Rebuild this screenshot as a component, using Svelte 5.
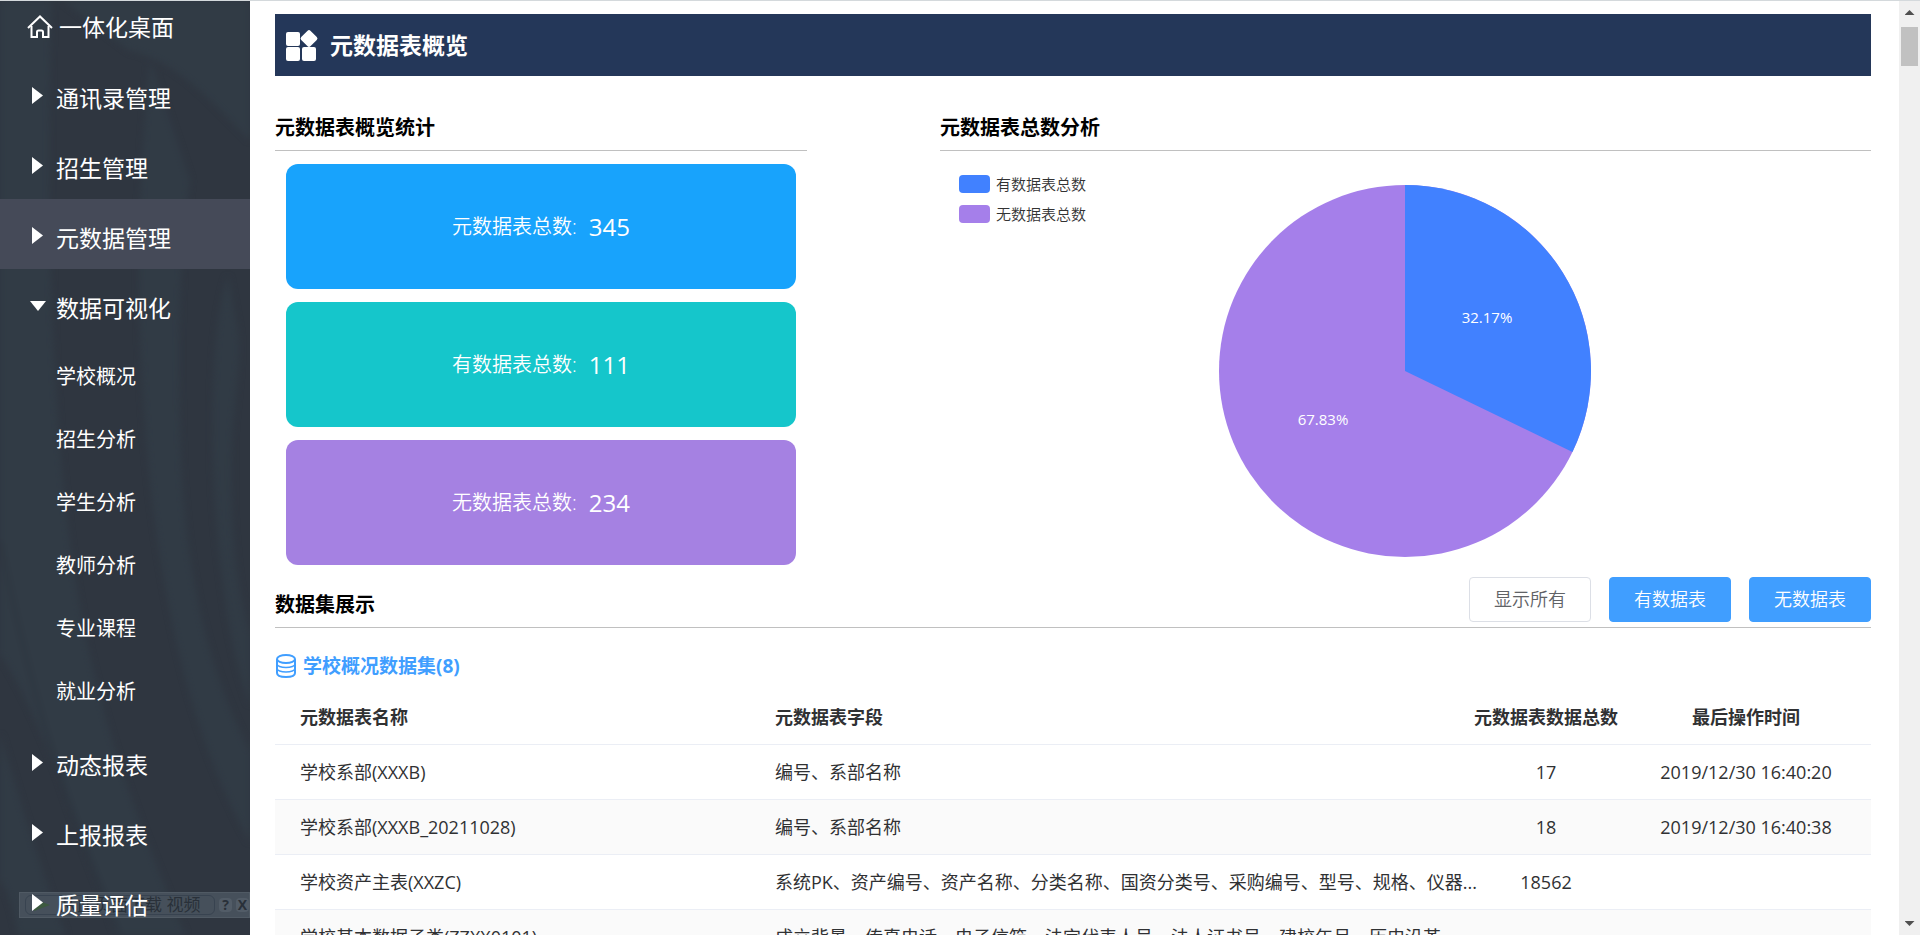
<script lang="ts">
  interface MenuItem {
    label: string;
    active?: boolean;
    children?: string[];
  }

  const menu: MenuItem[] = [
    { label: '通讯录管理' },
    { label: '招生管理' },
    { label: '元数据管理', active: true },
    {
      label: '数据可视化',
      children: ['学校概况', '招生分析', '学生分析', '教师分析', '专业课程', '就业分析'],
    },
    { label: '动态报表' },
    { label: '上报报表' },
    { label: '质量评估' },
  ];

  const stats = [
    { label: '元数据表总数', value: 345, tone: 'blue' },
    { label: '有数据表总数', value: 111, tone: 'teal' },
    { label: '无数据表总数', value: 234, tone: 'purple' },
  ];

  const rows = [
    { name: '学校系部(XXXB)', fields: '编号、系部名称', total: 17, time: '2019/12/30 16:40:20' },
    { name: '学校系部(XXXB_20211028)', fields: '编号、系部名称', total: 18, time: '2019/12/30 16:40:38' },
    {
      name: '学校资产主表(XXZC)',
      fields: '系统PK、资产编号、资产名称、分类名称、国资分类号、采购编号、型号、规格、仪器...',
      total: 18562,
      time: '',
    },
    {
      name: '学校基本数据子类(ZZXX0101)',
      fields: '成立背景、传真电话、电子信箱、法定代表人号、法人证书号、建校年月、历史沿革',
      total: '',
      time: '',
    },
  ];

  // Pie geometry: first slice starts at 12 o'clock and runs clockwise
  const R = 186;
  const share = stats[1].value / stats[0].value;
  const endX = R + R * Math.sin(share * 2 * Math.PI);
  const endY = R - R * Math.cos(share * 2 * Math.PI);
  const withData = (share * 100).toFixed(2) + '%';
  const withoutData = ((1 - share) * 100).toFixed(2) + '%';
</script>

<div class="layout">
  <nav class="sidebar">
    <svg class="streaks" viewBox="0 0 250 935" preserveAspectRatio="none" aria-hidden="true">
      <path d="M-10 -10H52C46 180 50 330 62 470C76 620 100 740 190 945H120C70 800 30 690 -10 640Z" />
      <path d="M150 60C136 200 134 330 152 500C170 640 200 760 260 860V770C215 690 190 600 182 480C176 340 180 250 190 180Z" />
      <path d="M228 275C208 330 210 480 220 560C228 630 238 680 260 730V660C234 600 230 520 232 440C234 400 242 360 238 330Z" />
      <path d="M50 -10H260V150C220 110 180 60 130 50Z" />
      <path d="M-10 700C20 800 40 870 70 945H20C12 900 5 880 -10 870Z" />
      <path class="crease" d="M0 540C30 690 60 790 120 935" />
    </svg>

    <div class="download-bar">
      <span class="download-main"><i></i>从此页面下载 视频</span>
      <span class="download-key">?</span>
      <span class="download-key">X</span>
    </div>

    <div class="menu">
      <a class="home" href="#home">
        <svg width="26" height="24" viewBox="0 0 26 24" fill="none" stroke="#fff" stroke-width="2">
          <path d="M1 13L13 1.500L25 13" />
          <path d="M4.500 11V22H10V17Q10 15.500 11.500 15.500H14.500Q16 15.500 16 17V22H21.500V11" />
        </svg>
        <span>一体化桌面</span>
      </a>

      {#each menu as item}
        <button class="menu-item" class:active={item.active} aria-expanded={!!item.children}>
          <span class="caret" class:open={item.children}></span>
          <span>{item.label}</span>
        </button>
        {#if item.children}
          <ul class="submenu">
            {#each item.children as child}
              <li><a href="#{child}">{child}</a></li>
            {/each}
          </ul>
        {/if}
      {/each}
    </div>
  </nav>

  <main class="content">
    <header class="banner">
      <svg width="33" height="33" viewBox="0 0 33 33" fill="#fff" aria-hidden="true">
        <rect x="0" y="3" width="14" height="14" rx="2" />
        <rect x="0" y="18" width="14" height="14" rx="2" />
        <rect x="16" y="18" width="14" height="14" rx="2" />
        <rect x="16.500" y="3" width="13" height="13" rx="2" transform="rotate(45 23 9.500)" />
      </svg>
      <h1>元数据表概览</h1>
    </header>

    <div class="overview">
      <section>
        <h2 class="section-title">元数据表概览统计</h2>
        <div class="cards">
          {#each stats as stat}
            <div class="card {stat.tone}">
              <span>{stat.label}:</span>
              <span class="value">{stat.value}</span>
            </div>
          {/each}
        </div>
      </section>

      <section>
        <h2 class="section-title">元数据表总数分析</h2>
        <div class="chart">
          <ul class="legend">
            <li><span class="swatch has"></span>有数据表总数</li>
            <li><span class="swatch none"></span>无数据表总数</li>
          </ul>
          <svg class="pie" width="372" height="372" viewBox="0 0 372 372">
            <circle cx={R} cy={R} r={R} fill="#a57fea" />
            <path d="M{R} {R}V0A{R} {R} 0 0 1 {endX} {endY}Z" fill="#4181ff" />
            <text x="268" y="138">{withData}</text>
            <text x="104" y="240">{withoutData}</text>
          </svg>
        </div>
      </section>
    </div>

    <section>
      <div class="dataset-head">
        <h2>数据集展示</h2>
        <div class="filters">
          <button class="btn plain">显示所有</button>
          <button class="btn">有数据表</button>
          <button class="btn">无数据表</button>
        </div>
      </div>

      <h3 class="group-title">
        <svg width="20" height="24" viewBox="0 0 20 24" fill="none" stroke="#409eff" stroke-width="2">
          <ellipse cx="10" cy="5" rx="9" ry="4" />
          <path d="M1 5V19C1 21.500 5 23 10 23S19 21.500 19 19V5" />
          <path d="M1 10C1 12 5 13.500 10 13.500S19 12 19 10M1 14.500C1 16.500 5 18 10 18S19 16.500 19 14.500" stroke-width="1.500" />
        </svg>
        学校概况数据集(8)
      </h3>

      <table>
        <thead>
          <tr>
            <th class="col-name">元数据表名称</th>
            <th>元数据表字段</th>
            <th class="col-total">元数据表数据总数</th>
            <th class="col-time">最后操作时间</th>
          </tr>
        </thead>
        <tbody>
          {#each rows as row}
            <tr>
              <td>{row.name}</td>
              <td>{row.fields}</td>
              <td class="col-total">{row.total}</td>
              <td class="col-time">{row.time}</td>
            </tr>
          {/each}
        </tbody>
      </table>
    </section>
  </main>

  <div class="scrollbar" aria-hidden="true">
    <span class="arrow up"></span>
    <span class="thumb"></span>
    <span class="arrow down"></span>
  </div>
</div>

<style>
  :global(body) {
    font-family: 'Open Sans', 'Noto Sans CJK SC', sans-serif;
    color: #303133;
    background: #fff;
  }

  .layout {
    display: flex;
    box-sizing: border-box;
    height: 100vh;
    overflow: hidden;
    border-top: 1px solid #d4d9dc;
  }

  /* Sidebar */
  .sidebar {
    position: relative;
    flex: none;
    width: 250px;
    overflow: hidden;
    background: #2f3640;
  }

  .streaks {
    position: absolute;
    inset: 0;
    width: 100%;
    height: 100%;
    fill: #313b45;
    filter: blur(3px);
  }

  .streaks .crease {
    fill: none;
    stroke: #2d353f;
    stroke-width: 3;
  }

  .menu {
    position: relative;
  }

  .home,
  .menu-item,
  .submenu a {
    color: #fff;
    text-decoration: none;
  }

  .home {
    display: flex;
    align-items: center;
    gap: 6px;
    box-sizing: border-box;
    height: 58px;
    padding: 0 27px 6px;
    font-size: 23px;
    line-height: 28px;
  }

  .menu-item {
    display: flex;
    align-items: center;
    gap: 10px;
    box-sizing: border-box;
    width: 100%;
    height: 70px;
    padding: 8px 30px 0;
    border: 0;
    background: none;
    font-family: inherit;
    font-size: 23px;
    line-height: 28px;
    text-align: left;
    cursor: pointer;
  }

  .menu-item.active {
    background: #454a58;
  }

  .caret {
    display: flex;
    width: 16px;
    height: 22px;
  }

  .caret::before {
    content: '';
    width: 11px;
    height: 17px;
    margin-left: 2px;
    background: #fff;
    clip-path: polygon(0 0, 100% 50%, 0 100%);
  }

  .caret.open::before {
    width: 16px;
    height: 10px;
    margin: 4px 0 0;
    clip-path: polygon(0 0, 100% 0, 50% 100%);
  }

  .submenu {
    margin: 0;
    padding: 6px 0 3px;
    list-style: none;
  }

  .submenu a {
    display: block;
    padding-left: 56px;
    font-size: 20px;
    line-height: 63px;
  }

  .download-bar {
    position: absolute;
    left: 19px;
    right: 0;
    bottom: 17px;
    display: flex;
    align-items: center;
    gap: 4px;
    box-sizing: border-box;
    height: 26px;
    padding-left: 5px;
    border: 1px solid #505a64;
    background: #46505b;
    color: #293039;
    font-size: 17px;
    line-height: 18px;
    white-space: nowrap;
  }

  .download-main {
    display: flex;
    align-items: center;
    gap: 10px;
    box-sizing: border-box;
    width: 190px;
    height: 20px;
    padding-left: 8px;
    border: 1px solid #384350;
    border-radius: 6px;
  }

  .download-main i {
    width: 16px;
    height: 12px;
    background: #3d5a3f;
    clip-path: polygon(0 0, 100% 50%, 0 100%);
  }

  .download-key {
    width: 13px;
    border-radius: 4px;
    background: #525c67;
    font-size: 14px;
    font-weight: 700;
    line-height: 14px;
    text-align: center;
  }

  /* Main area */
  .content {
    flex: 1;
    min-width: 0;
    padding: 13px 28px 0 25px;
    overflow: hidden;
  }

  .banner {
    display: flex;
    align-items: center;
    gap: 11px;
    height: 62px;
    padding-left: 11px;
    background: #243759;
    color: #fff;
  }

  .banner h1 {
    margin: 0;
    font-size: 23px;
    line-height: 28px;
  }

  .overview {
    display: grid;
    grid-template-columns: 4fr 7fr;
    column-gap: 8.333%;
    padding-top: 24px;
  }

  .section-title,
  .dataset-head h2 {
    margin: 0;
    padding-top: 6px;
    color: #000;
    font-size: 20px;
    line-height: 44px;
  }

  .section-title {
    border-bottom: 1px solid #c0c0c0;
  }

  .cards {
    display: flex;
    flex-direction: column;
    gap: 13px;
    padding: 13px 11px 12px;
  }

  .card {
    display: flex;
    align-items: center;
    justify-content: center;
    gap: 12px;
    height: 125px;
    border-radius: 12px;
    color: #fff;
    font-size: 20px;
    font-weight: 350;
    line-height: 30px;
  }

  .card .value {
    font-size: 24px;
    font-weight: 400;
  }

  .card.blue {
    background: #18a3fc;
  }

  .card.teal {
    background: #15c6cb;
  }

  .card.purple {
    background: #a581e2;
  }

  .chart {
    display: grid;
    grid-template-columns: 1fr auto 1fr;
    padding-top: 18px;
  }

  .legend {
    display: flex;
    flex-direction: column;
    gap: 10px;
    margin: 0;
    padding: 5px 0 0 19px;
    color: #333;
    font-size: 15px;
    font-weight: 350;
    line-height: 20px;
    list-style: none;
  }

  .legend li {
    display: flex;
    align-items: center;
    gap: 6px;
  }

  .swatch {
    width: 31px;
    height: 18px;
    border-radius: 4px;
  }

  .swatch.has {
    background: #4181ff;
  }

  .swatch.none {
    background: #a57fea;
  }

  .pie {
    margin-top: 16px;
  }

  .pie text {
    fill: #fff;
    font-size: 15px;
    text-anchor: middle;
  }

  /* Dataset list */
  .dataset-head {
    display: flex;
    justify-content: space-between;
    border-bottom: 1px solid #c0c0c0;
  }

  .filters {
    display: flex;
    gap: 18px;
  }

  .btn {
    box-sizing: border-box;
    width: 122px;
    height: 45px;
    padding: 0 0 4px;
    border: 1px solid #409eff;
    border-radius: 4px;
    background: #409eff;
    color: #fff;
    font-family: inherit;
    font-size: 18px;
    font-weight: 350;
    cursor: pointer;
  }

  .btn.plain {
    border-color: #dcdfe6;
    background: #fff;
    color: #606266;
  }

  .group-title {
    display: flex;
    align-items: center;
    gap: 7px;
    margin: 0;
    padding: 23px 0 8px 1px;
    color: #409eff;
    font-size: 19px;
    line-height: 30px;
  }

  table {
    width: 100%;
    table-layout: fixed;
    border-collapse: separate;
    border-spacing: 0;
    font-size: 18px;
    line-height: 30px;
  }

  th,
  td {
    padding: 12px 0 12px 25px;
    border-bottom: 1px solid #ebeef5;
    text-align: left;
    white-space: nowrap;
  }

  th {
    padding-top: 13px;
    font-weight: 700;
  }

  tbody tr:nth-child(even) {
    background: #fafafa;
  }

  .col-name {
    width: 450px;
  }

  .col-total,
  .col-time {
    padding-left: 0;
    text-align: center;
  }

  .col-total {
    width: 150px;
  }

  .col-time {
    width: 250px;
  }

  /* Scrollbar */
  .scrollbar {
    display: flex;
    flex: none;
    flex-direction: column;
    align-items: center;
    box-sizing: border-box;
    width: 21px;
    padding: 9px 0;
    background: #f0f0f0;
  }

  .arrow {
    width: 10px;
    height: 5px;
    background: #505050;
    clip-path: polygon(50% 0, 100% 100%, 0 100%);
  }

  .arrow.down {
    margin-top: auto;
    clip-path: polygon(0 0, 100% 0, 50% 100%);
  }

  .thumb {
    width: 17px;
    height: 39px;
    margin-top: 12px;
    background: #c1c1c1;
  }
</style>
